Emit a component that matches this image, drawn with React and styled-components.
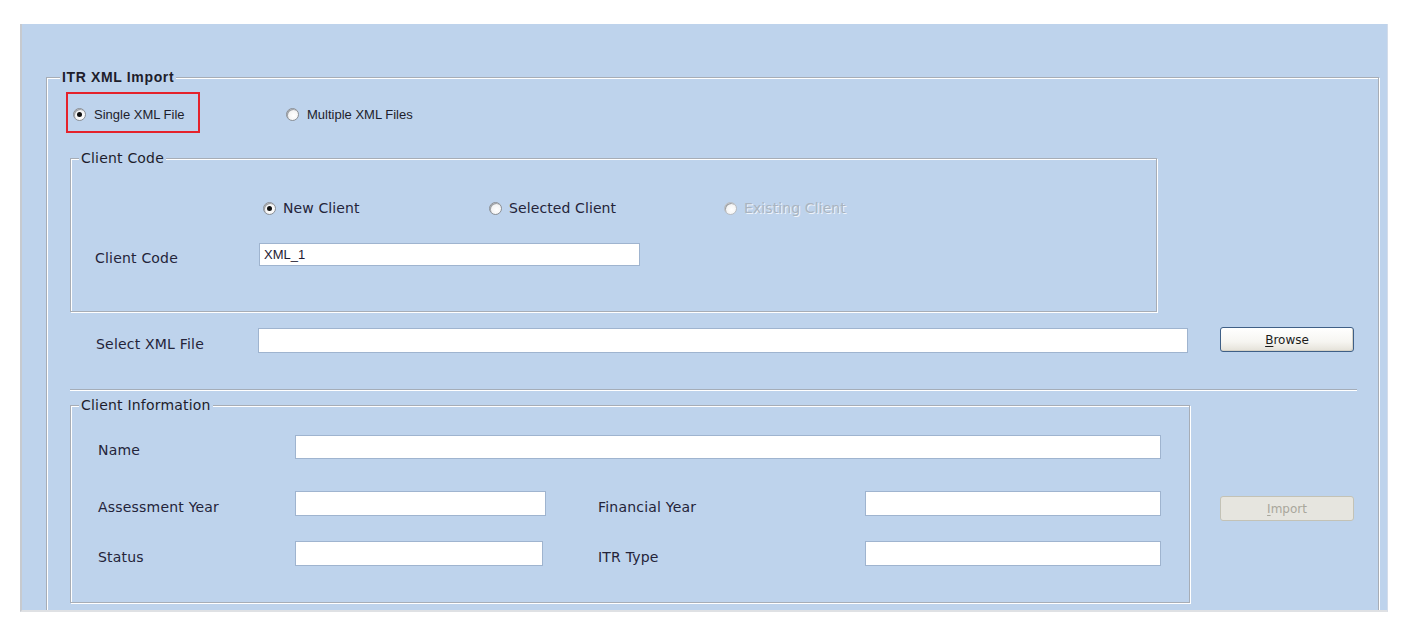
import React from "react";
import styled, { createGlobalStyle } from "styled-components";

const GlobalStyle = createGlobalStyle`
  html, body {
    margin: 0;
    padding: 0;
    background: #ffffff;
  }
  body {
    font-family: "DejaVu Sans", Verdana, sans-serif;
    color: #24243a;
  }
`;

const Page = styled.div`
  padding: 24px 0 0 20px;
`;

const Panel = styled.div`
  width: 1368px;
  height: 588px;
  box-sizing: border-box;
  padding: 45px 8px 0 24px;
  background: #bed3ec;
  border-left: 2px solid #c7cacf;
  border-bottom: 2px solid #dfe1e4;
  border-right: 1px solid #d3dcea;
  overflow: hidden;
`;

const GroupBox = styled.fieldset`
  margin: ${({ $margin }) => $margin || "0"};
  width: ${({ $width }) => $width || "auto"};
  box-sizing: border-box;
  min-width: 0;
  padding: ${({ $pad }) => $pad || "0"};
  border: 1px solid #a7adb6;
  box-shadow: inset 1px 1px 0 #ffffff, 1px 1px 0 #ffffff;
  flex-shrink: 0;
`;

const Legend = styled.legend`
  margin-left: ${({ $offset }) => $offset}px;
  padding: 0 2px;
  height: 16px;
  line-height: 16px;
  background: #bed3ec;
  font-family: ${({ $bold }) =>
    $bold ? '"Liberation Sans", Arial, sans-serif' : '"DejaVu Sans", Verdana, sans-serif'};
  font-size: 14px;
  font-weight: ${({ $bold }) => ($bold ? 700 : 400)};
  letter-spacing: ${({ $bold }) => ($bold ? "0.65px" : "0.2px")};
  color: #1d1d2b;
`;

const ModeRow = styled.div`
  display: flex;
  align-items: center;
  height: 41px;
  margin: 7px 0 0 19px;
`;

const ModeOption = styled.label`
  display: flex;
  align-items: center;
  gap: 8px;
  box-sizing: border-box;
  height: 41px;
  padding-top: 3px;
  font-family: "Liberation Sans", Arial, sans-serif;
  font-size: 13px;
  color: #1d1d2b;
  ${({ $highlighted }) =>
    $highlighted
      ? `
    width: 134px;
    padding-left: 5px;
    border: 2px solid #e5222b;
  `
      : `
    margin-left: 86px;
  `}
`;

const RadioCircle = styled.span`
  position: relative;
  display: inline-block;
  width: 13px;
  height: 13px;
  box-sizing: border-box;
  border-radius: 50%;
  border: 1px solid ${({ $disabled }) => ($disabled ? "#b9bcc0" : "#8b8f95")};
  background: radial-gradient(circle at 60% 60%, #ffffff 0%, #f4f4f4 55%, #d8d8d8 100%);
  box-shadow: inset 1px 1px 0 #9da1a6;
  flex-shrink: 0;

  &::after {
    content: "";
    display: ${({ $checked }) => ($checked ? "block" : "none")};
    position: absolute;
    left: 3px;
    top: 3px;
    width: 5px;
    height: 5px;
    border-radius: 50%;
    background: #101010;
  }
`;

const ClientTypeRow = styled.div`
  display: flex;
  align-items: center;
  height: 24px;
  margin-top: 30px;
  padding-left: 192px;
`;

const RadioItem = styled.label`
  display: flex;
  align-items: center;
  gap: 7px;
  width: ${({ $width }) => $width}px;
  font-size: 14px;
  letter-spacing: 0.1px;
  color: ${({ $disabled }) => ($disabled ? "#aab4c0" : "#24243a")};
  text-shadow: ${({ $disabled }) => ($disabled ? "1px 1px 0 #eef3fa" : "none")};
`;

const FieldRow = styled.div`
  display: flex;
  align-items: center;
  margin: ${({ $margin }) => $margin};
`;

const FieldLabel = styled.span`
  width: ${({ $width }) => $width}px;
  flex-shrink: 0;
  font-size: 14px;
  letter-spacing: 0.2px;
  padding-top: 6px;
  color: #24243a;
`;

const TextBox = styled.input`
  box-sizing: border-box;
  width: ${({ $width }) => $width}px;
  height: ${({ $height }) => $height || 25}px;
  margin: 0;
  padding: 0 4px;
  border: 1px solid #9fb4cf;
  background: #ffffff;
  font-family: "Liberation Sans", Arial, sans-serif;
  font-size: 13px;
  color: #1e1a33;
  outline: none;
`;

const Button = styled.button`
  box-sizing: border-box;
  width: 134px;
  height: 25px;
  margin: ${({ $margin }) => $margin || "0"};
  padding: 0;
  border-radius: 3px;
  font-family: "DejaVu Sans", Verdana, sans-serif;
  font-size: 12px;
  ${({ disabled }) =>
    disabled
      ? `
    border: 1px solid #c3c2b6;
    background: #e6e5df;
    color: #a9a79c;
  `
      : `
    border: 1px solid #3f5f86;
    background: linear-gradient(#ffffff 0%, #f6f5f1 60%, #e4e1d8 100%);
    color: #1b1b1b;
    box-shadow: inset -1px -1px 0 #d6d2c6;
  `}

  u {
    text-decoration: underline;
    text-underline-offset: 2px;
  }
`;

const Separator = styled.div`
  width: 1287px;
  height: 0;
  margin: 36px 0 0 23px;
  border-top: 1px solid #a5adb8;
  border-bottom: 1px solid #ffffff;
`;

const InfoRow = styled.div`
  display: flex;
  align-items: flex-start;
  margin: 6px 0 0 23px;
`;

const InfoRows = styled.div`
  display: flex;
  flex-direction: column;
  padding-left: 27px;
`;

const InfoLine = styled.div`
  display: grid;
  grid-template-columns: 197px 251px 52px 267px 296px;
  align-items: center;
  height: ${({ $height }) => $height}px;
  margin-top: ${({ $top }) => $top}px;
`;

const InfoLabel = styled.span`
  font-size: 14px;
  letter-spacing: 0.2px;
  padding-top: 6px;
  color: #24243a;
  grid-column: ${({ $col }) => $col};
`;

const InfoInput = styled(TextBox)`
  grid-column: ${({ $col }) => $col};
  height: 100%;
`;

const SideActions = styled.div`
  margin-left: 30px;
  padding-top: 99px;
`;

export default function App() {
  return (
    <>
      <GlobalStyle />
      <Page>
        <Panel>
          <GroupBox $pad="0 0 30px 0">
            <Legend $offset={13} $bold>
              ITR XML Import
            </Legend>

            <ModeRow>
              <ModeOption $highlighted>
                <RadioCircle $checked />
                Single XML File
              </ModeOption>
              <ModeOption>
                <RadioCircle />
                Multiple XML Files
              </ModeOption>
            </ModeRow>

            <GroupBox $margin="17px 0 0 23px" $width="1087px" $pad="0 0 45px 0">
              <Legend $offset={8}>Client Code</Legend>
              <ClientTypeRow>
                <RadioItem $width={226}>
                  <RadioCircle $checked />
                  New Client
                </RadioItem>
                <RadioItem $width={235}>
                  <RadioCircle />
                  Selected Client
                </RadioItem>
                <RadioItem $width={200} $disabled>
                  <RadioCircle $disabled />
                  Existing Client
                </RadioItem>
              </ClientTypeRow>
              <FieldRow $margin="23px 0 0 24px">
                <FieldLabel $width={164}>Client Code</FieldLabel>
                <TextBox $width={381} $height={23} defaultValue="XML_1" />
              </FieldRow>
            </GroupBox>

            <FieldRow $margin="16px 0 0 49px">
              <FieldLabel $width={162}>Select XML File</FieldLabel>
              <TextBox $width={930} $height={25} />
              <Button $margin="-2px 0 0 32px">
                <u>B</u>rowse
              </Button>
            </FieldRow>

            <Separator />

            <InfoRow>
              <GroupBox $width="1120px" $pad="0 0 36px 0">
                <Legend $offset={8}>Client Information</Legend>
                <InfoRows>
                  <InfoLine $height={24} $top={22}>
                    <InfoLabel $col="1">Name</InfoLabel>
                    <InfoInput $col="2 / 6" />
                  </InfoLine>
                  <InfoLine $height={25} $top={32}>
                    <InfoLabel $col="1">Assessment Year</InfoLabel>
                    <InfoInput $col="2" />
                    <InfoLabel $col="4">Financial Year</InfoLabel>
                    <InfoInput $col="5" />
                  </InfoLine>
                  <InfoLine $height={25} $top={25}>
                    <InfoLabel $col="1">Status</InfoLabel>
                    <InfoInput $col="2" $width={248} />
                    <InfoLabel $col="4">ITR Type</InfoLabel>
                    <InfoInput $col="5" />
                  </InfoLine>
                </InfoRows>
              </GroupBox>
              <SideActions>
                <Button disabled>
                  <u>I</u>mport
                </Button>
              </SideActions>
            </InfoRow>
          </GroupBox>
        </Panel>
      </Page>
    </>
  );
}
